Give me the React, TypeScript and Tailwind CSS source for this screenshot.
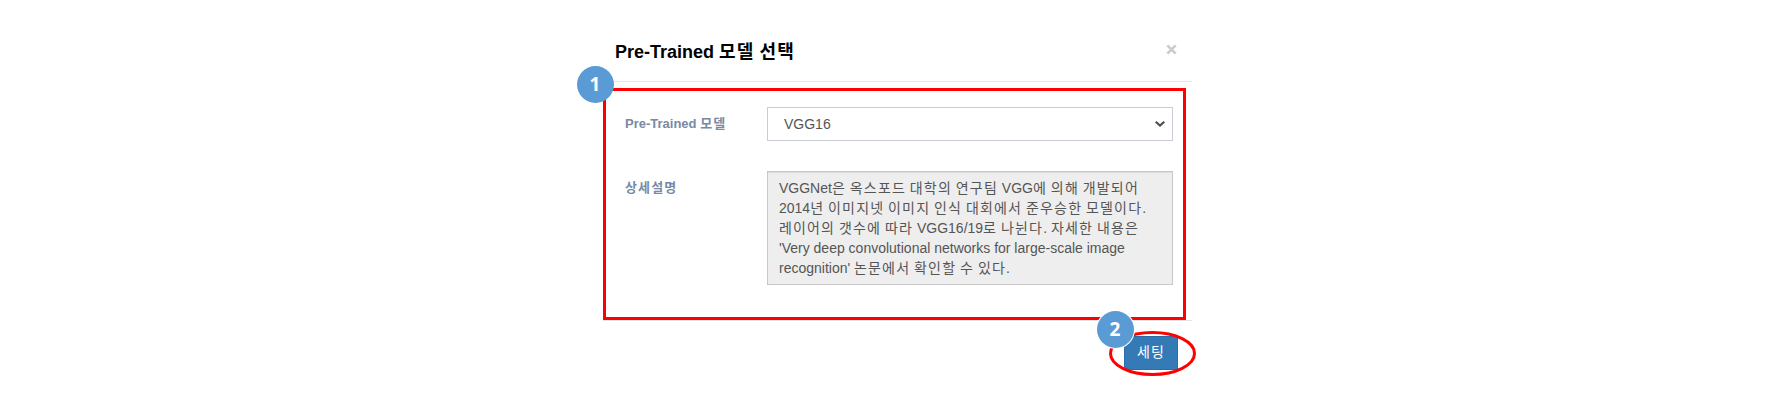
import React from "react";

const lines = [
  "VGGNet은 옥스포드 대학의 연구팀 VGG에 의해 개발되어",
  "2014년 이미지넷 이미지 인식 대회에서 준우승한 모델이다.",
  "레이어의 갯수에 따라 VGG16/19로 나뉜다. 자세한 내용은",
  "'Very deep convolutional networks for large-scale image",
  "recognition' 논문에서 확인할 수 있다.",
];

/** Sets Hangul runs slightly wider than the Latin text around them. */
function Mixed({ text }: { text: string }) {
  return (
    <>
      {text.split(/([가-힣]+)/).map((part, i) =>
        i % 2 === 1 ? (
          <span key={i} className="tracking-[1.15px]">
            {part}
          </span>
        ) : (
          part
        ),
      )}
    </>
  );
}

function StepBadge({ step, className }: { step: number; className: string }) {
  return (
    <span
      className={`absolute z-10 flex size-[37px] items-center justify-center rounded-full bg-[#5b9bd5] pr-px font-['Open_Sans',sans-serif] text-[19px] leading-none font-bold text-white ${className}`}
    >
      {step}
    </span>
  );
}

export default function App() {
  return (
    <main className="h-[414px] w-[1778px] overflow-hidden bg-white pl-[603px] font-['Liberation_Sans','Noto_Sans_CJK_KR',sans-serif] text-sm text-[#555]">
      <section className="w-[589px]">
        <header className="flex h-[82px] items-start justify-between border-b border-[#e5e5e5] pr-[15px] pl-3">
          <h1 className="pt-[40px] text-[18px] leading-6 font-bold text-black">
            <Mixed text="Pre-Trained 모델 선택" />
          </h1>
          <button aria-label="Close" className="mt-[44px] flex size-[11px] items-center justify-center">
            <svg viewBox="0 0 11 11" className="size-[11px]" fill="none" stroke="#ccc" strokeWidth="2.6">
              <path d="M1.3 1.3 9.7 9.7M9.7 1.3 1.3 9.7" />
            </svg>
          </button>
        </header>

        <div className="relative mt-1.5 h-[232px] w-[583px] border-[3px] border-[#f00] pt-4 pr-[10px] pl-[19px]">
          <StepBadge step={1} className="-top-[25px] -left-[29px]" />
          <div className="flex">
            <label className="w-[142px] shrink-0 pt-[7px] text-[13px] leading-5 font-bold text-[#788aa3]">
              <Mixed text="Pre-Trained 모델" />
            </label>
            <div className="flex h-[34px] grow items-center justify-between border border-[#c8ccd4] bg-white pr-[6px] pl-4">
              <span>VGG16</span>
              <svg viewBox="0 0 12 8" className="h-2 w-3" fill="none" stroke="#505050" strokeWidth="2.2">
                <path d="M1.7 1.7 6 5.5 10.3 1.7" />
              </svg>
            </div>
          </div>
          <div className="mt-[30px] flex">
            <label className="w-[142px] shrink-0 pt-[7px] text-[13px] leading-5 font-bold text-[#788aa3]">
              <Mixed text="상세설명" />
            </label>
            <div className="h-[114px] grow border border-[#c8c8c8] bg-[#eee] pt-[6px] pl-[11px] leading-5 whitespace-nowrap shadow-[inset_0_1px_1px_rgba(0,0,0,0.075)]">
              {lines.map((text) => (
                <p key={text} className="h-5">
                  <Mixed text={text} />
                </p>
              ))}
            </div>
          </div>
        </div>

        <footer className="relative flex justify-end border-t border-[#e5e5e5] pt-[15px] pr-[14px]">
          <button className="h-[34px] w-[54px] border border-[#2e6da4] bg-[#337ab7] pb-0.5 text-sm text-white">
            <Mixed text="세팅" />
          </button>
          <svg
            viewBox="0 0 88 46"
            className="absolute top-[10px] left-[506px] h-[46px] w-[88px]"
            fill="none"
            stroke="#f00"
            strokeWidth="3"
          >
            <ellipse cx="43.5" cy="22.5" rx="42" ry="21" />
          </svg>
          <StepBadge step={2} className="-top-[10px] left-[494px] ring-1 ring-white" />
        </footer>
      </section>
    </main>
  );
}
